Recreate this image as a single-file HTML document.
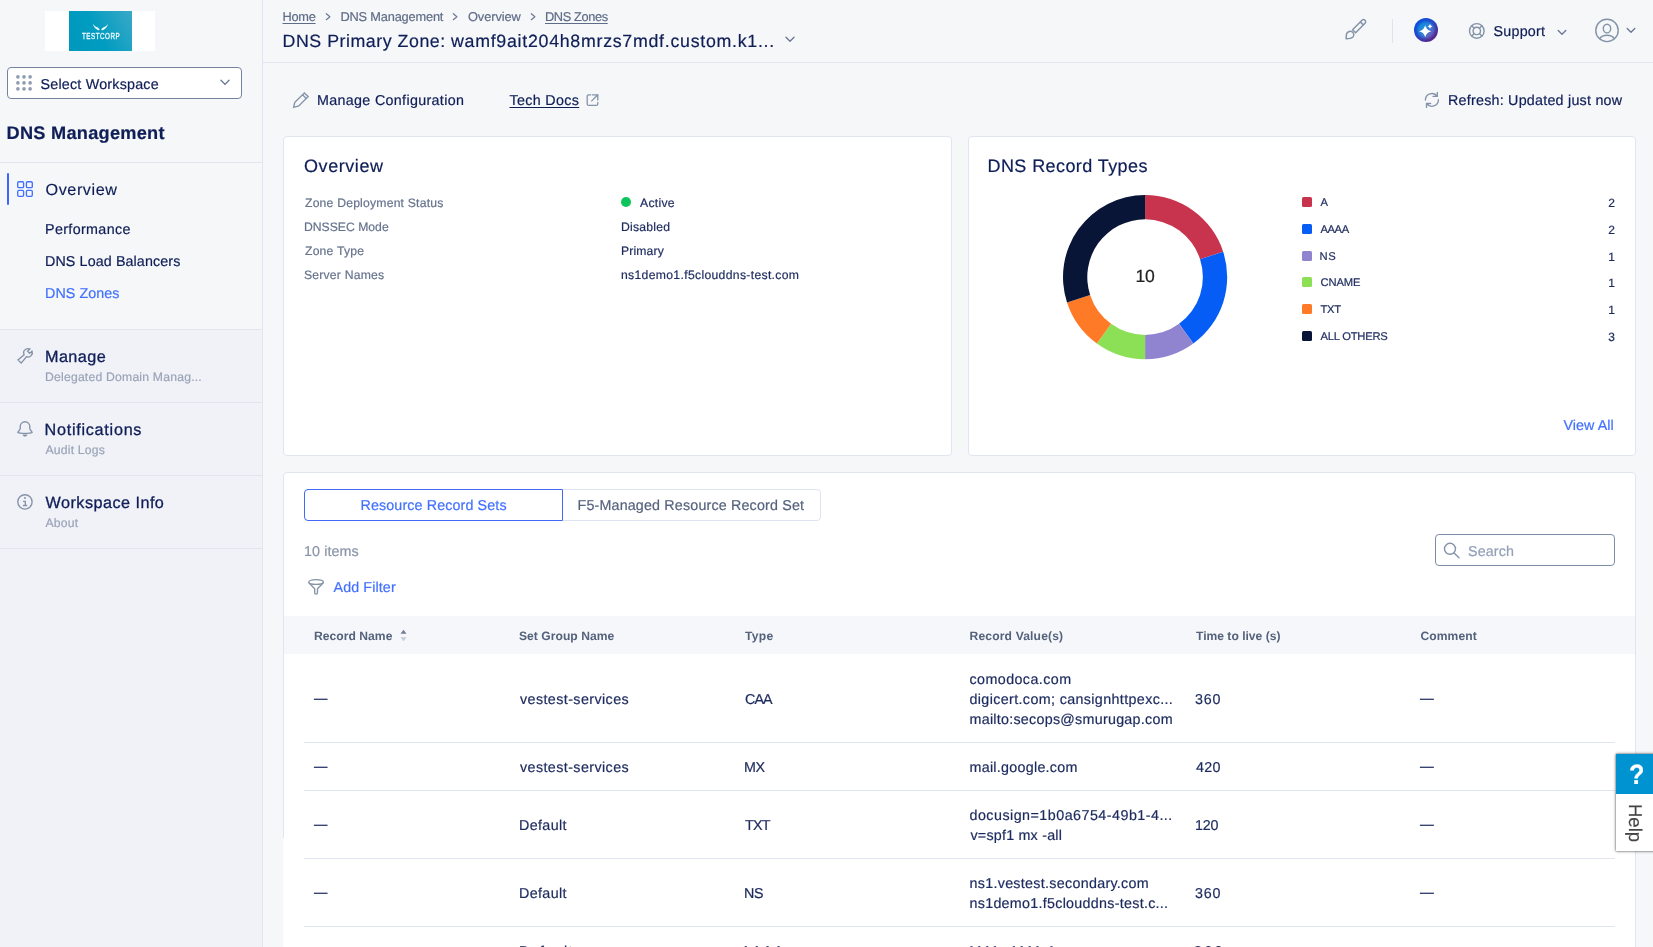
<!DOCTYPE html>
<html lang="en">
<head>
<meta charset="utf-8">
<title>DNS Primary Zone - DNS Management</title>
<style>
*{box-sizing:border-box;margin:0;padding:0}
html,body{width:1653px;height:947px;overflow:hidden}
body{will-change:transform}
body{position:relative;background:#f6f7f9;font-family:"Liberation Sans",Arial,sans-serif;color:#0f1e57}
.a{position:absolute}
.t{position:absolute;white-space:nowrap;line-height:1;transform-origin:0 50%;text-rendering:geometricPrecision;-webkit-text-stroke:.2px currentColor}
h1.t,h2.t{font-weight:normal}
.ul{text-decoration:underline;text-decoration-thickness:1px;text-underline-offset:2px}
.ln{position:absolute;background:#e1e5f0}
.card{position:absolute;background:#fff;border:1px solid #e1e5f0;border-radius:4px}
svg{position:absolute;overflow:visible}
.ic{fill:none;stroke:#8493a8;stroke-width:1.35;stroke-linecap:round;stroke-linejoin:round}
.sq{position:absolute;width:10px;height:10px;border-radius:1.5px;left:1302px}

</style>
</head>
<body>

<aside id="sidebar">
<div class="g">
  <div class="a" style="left:0;top:330px;width:262px;height:617px;background:#f1f2f8"></div>
  <div class="ln" style="left:262px;top:0;width:1px;height:947px"></div>
  <div class="ln" style="left:0;top:162px;width:262px;height:1px"></div>
  <div class="ln" style="left:0;top:329px;width:262px;height:1px"></div>
  <div class="ln" style="left:0;top:402px;width:262px;height:1px"></div>
  <div class="ln" style="left:0;top:475px;width:262px;height:1px"></div>
  <div class="ln" style="left:0;top:548px;width:262px;height:1px"></div>
  <!-- logo -->
  <div class="a" style="left:45px;top:11px;width:110px;height:40px;background:#fff"></div>
  <div class="a" style="left:69px;top:11px;width:63px;height:40px;background:linear-gradient(60deg,#0098bd 0%,#019cc1 45%,#3aa9c7 100%)"></div>
  <svg style="left:92px;top:23px" width="17" height="9" viewBox="0 0 17 9"><path d="M0.9 0.8C1.2 3.2 3 5.600 5.600 6.900C6.600 7.400 7.400 7.400 7.600 6.800C7.600 5.600 6.200 4.600 4.600 4C3 3.300 1.800 2.400 0.900 0.800Z M16 0.800C15.700 3.200 13.900 5.600 11.300 6.900C10.300 7.400 9.500 7.400 9.300 6.800C9.300 5.600 10.700 4.600 12.300 4C13.900 3.300 15.100 2.400 16 0.800Z" fill="#fff" fill-opacity=".92"/></svg>
  <!-- workspace select -->
  <div class="a" style="left:7px;top:67px;width:235px;height:32px;background:#fff;border:1px solid #76839f;border-radius:4px"></div>
  <svg style="left:16px;top:75px" width="16" height="16" viewBox="0 0 16 16" fill="#8e9ab2"><circle cx="1.9" cy="1.9" r="1.8"/><circle cx="8" cy="1.9" r="1.8"/><circle cx="14.1" cy="1.9" r="1.8"/><circle cx="1.9" cy="7.9" r="1.8"/><circle cx="8" cy="7.9" r="1.8"/><circle cx="14.1" cy="7.9" r="1.8"/><circle cx="1.9" cy="13.9" r="1.8"/><circle cx="8" cy="13.9" r="1.8"/><circle cx="14.1" cy="13.9" r="1.8"/></svg>
  <svg style="left:220px;top:79px" width="10" height="7" viewBox="0 0 10 7"><path class="ic" style="stroke:#6b7894" d="M1 1.2 L5 5.4 L9 1.2"/></svg>
  <!-- overview active -->
  <div class="a" style="left:7px;top:173px;width:2px;height:32px;background:#3c66ff;border-radius:1px"></div>
  <svg style="left:17px;top:181px" width="16" height="16" viewBox="0 0 16 16"><g fill="none" stroke="#4371ff" stroke-width="1.35"><rect x="0.7" y="0.7" width="5.9" height="5.9" rx="1.2"/><rect x="9.4" y="0.7" width="5.9" height="5.9" rx="1.2"/><rect x="0.7" y="9.4" width="5.9" height="5.9" rx="1.2"/><rect x="9.4" y="9.4" width="5.9" height="5.9" rx="1.2"/></g></svg>
  <!-- wrench -->
  <svg style="left:17px;top:348px" width="16" height="16" viewBox="0 0 16 16"><path class="ic" style="stroke-linejoin:miter" d="M0.900 11.900L7.100 6.700C6.200 4.600 6.700 2.600 8.400 1.500C9.800 0.600 11.500 0.500 12.800 1L10.600 3.300L12.600 5.400L15 3.100C15.600 4.600 15.300 6.400 14.200 7.600C13 8.900 11.200 9.300 9.400 8.700L4.200 15.100Z"/></svg>
  <!-- bell -->
  <svg style="left:17px;top:421px" width="16" height="17" viewBox="0 0 16 17"><path class="ic" d="M3.200 5.500a4.800 4.800 0 0 1 9.600 0V7.600C12.800 9.400 15.300 10.400 15.200 11.500C13 12.700 3 12.700 0.800 11.500C0.700 10.400 3.200 9.400 3.200 7.600Z"/><path d="M5.600 13.500C6 16.300 10 16.300 10.400 13.500Z" fill="#8493a8"/></svg>
  <!-- info -->
  <svg style="left:17px;top:494px" width="16" height="16" viewBox="0 0 16 16"><circle class="ic" cx="7.950" cy="7.900" r="7.150"/><path class="ic" style="stroke-linecap:butt;stroke-linejoin:miter" d="M5.900 7.300H8.300V11.500M5.900 11.500H10.200"/><rect x="7.100" y="3.100" width="1.700" height="1.700" fill="#8493a8"/></svg>
</div>
<span class="t" id="logo" style="left:82.00px;top:32.03px;font-size:8.7px;color:#f4fbfd;-webkit-text-stroke:0.3px currentColor;letter-spacing:0.700px;transform:scaleX(0.7231)">TESTCORP</span>
<span class="t" id="selws" style="left:40.50px;top:78.03px;font-size:14.3px;letter-spacing:0.213px">Select Workspace</span>
<h2 class="t" id="dnsm" style="left:6.50px;top:124.03px;font-size:18.2px;font-weight:bold;letter-spacing:0.262px">DNS Management</h2>
<a class="t" id="ov" style="left:45.50px;top:182.03px;font-size:16.2px;-webkit-text-stroke:0.15px currentColor;letter-spacing:0.571px">Overview</a>
<a class="t" id="perf" style="left:45.00px;top:223.03px;font-size:14.3px;letter-spacing:0.360px">Performance</a>
<a class="t" id="dlb" style="left:45.00px;top:255.04px;font-size:14.3px;letter-spacing:0.106px">DNS Load Balancers</a>
<a class="t" id="dz" style="left:45.00px;top:287.03px;font-size:14.3px;color:#4371ff;letter-spacing:0.075px">DNS Zones</a>
<a class="t" id="man" style="left:45.00px;top:349.03px;font-size:16.2px;-webkit-text-stroke:0.3px currentColor;letter-spacing:0.440px">Manage</a>
<span class="t" id="man2" style="left:45.00px;top:371.03px;font-size:12.2px;color:#9aa4b8;letter-spacing:0.208px">Delegated Domain Manag...</span>
<a class="t" id="not" style="left:44.50px;top:422.03px;font-size:16.2px;-webkit-text-stroke:0.3px currentColor;letter-spacing:0.733px">Notifications</a>
<span class="t" id="not2" style="left:45.50px;top:444.03px;font-size:12.2px;color:#9aa4b8;letter-spacing:0.200px">Audit Logs</span>
<a class="t" id="wi" style="left:45.50px;top:495.03px;font-size:16.2px;-webkit-text-stroke:0.3px currentColor;letter-spacing:0.477px">Workspace Info</a>
<span class="t" id="wi2" style="left:45.50px;top:517.03px;font-size:12.2px;color:#9aa4b8;letter-spacing:0.200px">About</span>
</aside>

<header id="topbar">
<div class="g">
  <div class="ln" style="left:263px;top:62px;width:1390px;height:1px"></div>
  <svg style="left:325px;top:12px" width="7" height="9" viewBox="0 0 7 9"><path class="ic" style="stroke:#6b7894;stroke-width:1.2" d="M1.3 1.7 L4.900 4.700 L1.300 7.700"/></svg>
  <svg style="left:452px;top:12px" width="7" height="9" viewBox="0 0 7 9"><path class="ic" style="stroke:#6b7894;stroke-width:1.2" d="M1.3 1.7 L4.900 4.700 L1.300 7.700"/></svg>
  <svg style="left:529.500px;top:12px" width="7" height="9" viewBox="0 0 7 9"><path class="ic" style="stroke:#6b7894;stroke-width:1.2" d="M1.3 1.7 L4.900 4.700 L1.300 7.700"/></svg>
  <svg style="left:785px;top:36px" width="10" height="7" viewBox="0 0 10 7"><path class="ic" style="stroke:#6b7894" d="M1 1.300 L5 5.300 L9 1.300"/></svg>
  <!-- brush -->
  <svg style="left:1345px;top:18px" width="22" height="22" viewBox="0 0 22 22"><g class="ic" style="stroke-width:1.5"><path transform="translate(9.100,13.200) rotate(45)" d="M-2.150 0V-13.300a2.150 2.150 0 0 1 4.300 0V0Z M-2.150 -11H2.150"/><path d="M1.100 20.700C1.300 18.500 1.200 17 1.700 15.600C2.600 13.400 5.500 12.600 7.400 14C9.200 15.400 9.300 17.800 7.600 19.300C6 20.700 3.500 20.700 1.100 20.700Z"/></g></svg>
  <div class="a" style="left:1392px;top:19px;width:1px;height:24px;background:#dfe3ee"></div>
  <!-- AI assistant -->
  <svg style="left:1414px;top:18px" width="24" height="24" viewBox="0 0 24 24">
    <defs>
      <linearGradient id="aig1" x1="0.15" y1="0.1" x2="0.85" y2="0.9"><stop offset="0" stop-color="#0a4fe0"/><stop offset="0.5" stop-color="#2a47c0"/><stop offset="1" stop-color="#5e1f86"/></linearGradient>
      <linearGradient id="aig2" x1="0.1" y1="0.1" x2="0.9" y2="0.9"><stop offset="0" stop-color="#0b93e0"/><stop offset="0.5" stop-color="#2f7fd8"/><stop offset="1" stop-color="#7a55b0"/></linearGradient>
      <filter id="aib" x="-20%" y="-20%" width="140%" height="140%"><feGaussianBlur stdDeviation="1.1"/></filter>
      <clipPath id="aic"><circle cx="12" cy="12" r="12"/></clipPath>
    </defs>
    <circle cx="12" cy="12" r="12" fill="url(#aig1)"/>
    <g clip-path="url(#aic)"><circle cx="12" cy="12" r="8.600" fill="url(#aig2)" filter="url(#aib)"/></g>
    <path d="M11.2 7.199999999999999Q12.44 12.00 17.4 13.2Q12.44 14.40 11.2 19.2Q9.96 14.40 4.999999999999999 13.2Q9.96 12.00 11.2 7.199999999999999Z" fill="#fff"/>
    <path d="M16 6.0Q16.48 7.92 18.4 8.4Q16.48 8.88 16 10.8Q15.52 8.88 13.6 8.4Q15.52 7.92 16 6.0Z" fill="#fff"/>
  </svg>
  <!-- support -->
  <svg style="left:1468px;top:22px" width="18" height="18" viewBox="0 0 18 18"><g class="ic" style="stroke-width:1.4"><circle cx="8.800" cy="8.900" r="7.300"/><circle cx="8.800" cy="8.900" r="3.700"/><path d="M3.700 3.800 L6.200 6.300 M13.900 3.800 L11.400 6.300 M3.700 14 L6.200 11.500 M13.900 14 L11.400 11.500"/></g></svg>
  <svg style="left:1557px;top:29px" width="10" height="7" viewBox="0 0 10 7"><path class="ic" style="stroke:#6b7894" d="M1.200 1.400 L5 5.200 L8.800 1.400"/></svg>
  <!-- user -->
  <svg style="left:1595px;top:18px" width="24" height="24" viewBox="0 0 24 24"><g class="ic" style="stroke-width:1.4"><circle cx="12" cy="12.400" r="11.200"/><ellipse cx="12" cy="10.600" rx="3.700" ry="4.300"/><path d="M4.600 20.600c1.600-2.300 4.200-3.300 7.400-3.300s5.800 1 7.400 3.300"/></g></svg>
  <svg style="left:1626px;top:27px" width="10" height="7" viewBox="0 0 10 7"><path class="ic" style="stroke:#6b7894" d="M1.200 1.400 L5 5.200 L8.800 1.400"/></svg>
  <!-- toolbar icons -->
  <svg style="left:292px;top:92px" width="18" height="17" viewBox="0 0 18 17"><path class="ic" style="stroke-linejoin:miter" d="M12.400 0.900L16.200 4.600L6.800 14L1.600 15.300L2.800 10.300ZM10.500 2.800L14.300 6.500"/></svg>
  <svg style="left:586px;top:93.500px" width="13" height="13" viewBox="0 0 13 13"><path class="ic" style="stroke-width:1.3" d="M4.700 0.800H2.700A1.500 1.500 0 0 0 1.200 2.300V9.900A1.500 1.500 0 0 0 2.700 11.400H10.300A1.500 1.500 0 0 0 11.800 9.900V8.400M6.400 0.800H11.800V6.100M11.800 0.800L5.700 6.900"/></svg>
  <svg style="left:1424px;top:92px" width="16" height="16" viewBox="0 0 16 16"><path class="ic" d="M1.400 8.100A6.500 6.500 0 0 1 13.200 4.300M13.300 0.500V4.400H9.100M14.400 7.700A6.500 6.500 0 0 1 2.600 11.500M2.500 15.400V11.500H6.600"/></svg>
</div>
<a class="t ul" id="bc1" style="left:282.50px;top:11.04px;font-size:12.8px;color:#5f6c87;letter-spacing:-0.267px">Home</a>
<a class="t" id="bc2" style="left:340.50px;top:11.04px;font-size:12.8px;color:#5f6c87;letter-spacing:-0.185px">DNS Management</a>
<a class="t" id="bc3" style="left:468.00px;top:11.04px;font-size:12.8px;color:#5f6c87;letter-spacing:-0.086px">Overview</a>
<a class="t ul" id="bc4" style="left:545.00px;top:11.04px;font-size:12.8px;color:#5f6c87;letter-spacing:-0.375px">DNS Zones</a>
<h1 class="t" id="title" style="left:282.50px;top:33.03px;font-size:17.8px;letter-spacing:0.537px">DNS Primary Zone:</h1>
<span class="t" id="title2" style="left:451.00px;top:33.03px;font-size:17.8px;letter-spacing:0.721px">wamf9ait204h8mrzs7mdf.custom.k1...</span>
<span class="t" id="sup" style="left:1493.50px;top:25.03px;font-size:14.3px;letter-spacing:0.233px">Support</span>
<a class="t" id="mc" style="left:317.00px;top:94.04px;font-size:14.3px;letter-spacing:0.326px">Manage Configuration</a>
<a class="t ul" id="td" style="left:509.50px;top:94.04px;font-size:14.3px;letter-spacing:0.325px">Tech Docs</a>
<span class="t" id="ref" style="left:1448.00px;top:94.03px;font-size:14.3px;letter-spacing:0.233px">Refresh: Updated just now</span>
</header>

<main id="content">
<section id="overview-card">
<div class="g">
  <div class="card" style="left:283px;top:136px;width:669px;height:320px"></div>
  <div class="a" style="left:621px;top:197px;width:10.400px;height:10.400px;border-radius:50%;background:#0cc65b"></div>
</div>
<h2 class="t" id="ovt" style="left:304.00px;top:157.02px;font-size:18px;letter-spacing:0.571px">Overview</h2>
<span class="t" id="l1" style="left:305.00px;top:197.02px;font-size:12.2px;color:#66738d;letter-spacing:0.200px">Zone Deployment Status</span>
<span class="t" id="l2" style="left:304.00px;top:221.03px;font-size:12.2px;color:#66738d">DNSSEC Mode</span>
<span class="t" id="l3" style="left:305.00px;top:245.02px;font-size:12.2px;color:#66738d;letter-spacing:0.200px">Zone Type</span>
<span class="t" id="l4" style="left:304.00px;top:269.03px;font-size:12.2px;color:#66738d;letter-spacing:0.200px">Server Names</span>
<span class="t" id="v1" style="left:640.00px;top:197.03px;font-size:12.2px;color:#1c2a5e;letter-spacing:0.280px">Active</span>
<span class="t" id="v2" style="left:621.00px;top:221.03px;font-size:12.2px;color:#1c2a5e;letter-spacing:0.229px">Disabled</span>
<span class="t" id="v3" style="left:621.00px;top:245.03px;font-size:12.2px;color:#1c2a5e;letter-spacing:0.133px">Primary</span>
<span class="t" id="v4" style="left:621.00px;top:269.02px;font-size:12.2px;color:#1c2a5e;letter-spacing:0.319px">ns1demo1.f5clouddns-test.com</span>
</section>

<section id="record-types-card">
<div class="g">
  <div class="card" style="left:968px;top:136px;width:668px;height:320px"></div>
  <svg style="left:1063px;top:194.700px" width="164.200" height="164.200" viewBox="-82.100 -82.100 164.200 164.200">
    <path d="M0.00 -82.10A82.1 82.1 0 0 1 78.08 -25.37L54.97 -17.86A57.8 57.8 0 0 0 0.00 -57.80Z" fill="#c8334d"/>
    <path d="M78.08 -25.37A82.1 82.1 0 0 1 48.26 66.42L33.97 46.76A57.8 57.8 0 0 0 54.97 -17.86Z" fill="#055df5"/>
    <path d="M48.26 66.42A82.1 82.1 0 0 1 0.00 82.10L0.00 57.80A57.8 57.8 0 0 0 33.97 46.76Z" fill="#9083cf"/>
    <path d="M0.00 82.10A82.1 82.1 0 0 1 -48.26 66.42L-33.97 46.76A57.8 57.8 0 0 0 0.00 57.80Z" fill="#8ce055"/>
    <path d="M-48.26 66.42A82.1 82.1 0 0 1 -78.08 25.37L-54.97 17.86A57.8 57.8 0 0 0 -33.97 46.76Z" fill="#ff7a27"/>
    <path d="M-78.08 25.37A82.1 82.1 0 0 1 -0.00 -82.10L-0.00 -57.80A57.8 57.8 0 0 0 -54.97 17.86Z" fill="#081537"/>
  </svg>
  <div class="sq" style="top:197.300px;background:#c8334d"></div>
  <div class="sq" style="top:224px;background:#055df5"></div>
  <div class="sq" style="top:250.800px;background:#9083cf"></div>
  <div class="sq" style="top:277px;background:#8ce055"></div>
  <div class="sq" style="top:304px;background:#ff7a27"></div>
  <div class="sq" style="top:331px;background:#081537"></div>
</div>
<h2 class="t" id="rtt" style="left:987.50px;top:157.02px;font-size:18px;letter-spacing:0.413px">DNS Record Types</h2>
<span class="t" id="ten" style="left:1135.50px;top:268.03px;font-size:17.6px;color:#222222;letter-spacing:-0.400px">10</span>
<span class="t" id="lg0" style="left:1320.50px;top:198.04px;font-size:11.2px;color:#1c2a5e">A</span>
<span class="t" id="lv0" style="left:1608.20px;top:197.03px;font-size:12px;color:#1c2a5e">2</span>
<span class="t" id="lg1" style="left:1320.50px;top:225.04px;font-size:11.2px;color:#1c2a5e;letter-spacing:-0.400px">AAAA</span>
<span class="t" id="lv1" style="left:1608.20px;top:224.03px;font-size:12px;color:#1c2a5e">2</span>
<span class="t" id="lg2" style="left:1319.50px;top:252.04px;font-size:11.2px;color:#1c2a5e;letter-spacing:0.600px">NS</span>
<span class="t" id="lv2" style="left:1608.20px;top:251.03px;font-size:12px;color:#1c2a5e">1</span>
<span class="t" id="lg3" style="left:1320.50px;top:278.04px;font-size:11.2px;color:#1c2a5e;letter-spacing:-0.100px">CNAME</span>
<span class="t" id="lv3" style="left:1608.20px;top:277.03px;font-size:12px;color:#1c2a5e">1</span>
<span class="t" id="lg4" style="left:1320.50px;top:305.04px;font-size:11.2px;color:#1c2a5e;letter-spacing:-0.300px">TXT</span>
<span class="t" id="lv4" style="left:1608.20px;top:304.03px;font-size:12px;color:#1c2a5e">1</span>
<span class="t" id="lg5" style="left:1320.50px;top:332.04px;font-size:11.2px;color:#1c2a5e;letter-spacing:-0.222px">ALL OTHERS</span>
<span class="t" id="lv5" style="left:1608.20px;top:331.03px;font-size:12px;color:#1c2a5e">3</span>
<a class="t" id="va" style="left:1563.50px;top:419.03px;font-size:14.3px;color:#4371ff;letter-spacing:0.057px">View All</a>
</section>

<section id="records-table">
<div class="g">
  <div class="card" style="left:283px;top:472px;width:1353px;height:500px"></div>
  <div class="a" style="left:283px;top:838px;width:1px;height:109px;background:#fbfbfd"></div>
  <!-- tabs -->
  <div class="a" style="left:562px;top:489px;width:259px;height:32px;border:1px solid #dfe3ef;border-radius:0 4px 4px 0"></div>
  <div class="a" style="left:304px;top:489px;width:259px;height:32px;border:1px solid #3f69f6;border-radius:4px 0 0 4px;background:#fff"></div>
  <!-- search -->
  <div class="a" style="left:1435px;top:534px;width:180px;height:32px;border:1px solid #7f8ca8;border-radius:4px;background:#fff"></div>
  <svg style="left:1443px;top:541.500px" width="17" height="17" viewBox="0 0 17 17"><g class="ic" style="stroke-width:1.4"><circle cx="7" cy="6.800" r="5.500"/><path d="M11.100 10.900 L16 15.700"/></g></svg>
  <!-- filter -->
  <svg style="left:308px;top:579px" width="16" height="16" viewBox="0 0 16 16"><g class="ic"><ellipse cx="8.050" cy="3" rx="7.300" ry="2.400"/><path d="M1 4.100L6.700 9.700V13.700a1.400 1.400 0 0 0 2.800 0V9.700L15.100 4.100"/></g></svg>
  <!-- table head -->
  <div class="a" style="left:284px;top:616px;width:1351px;height:38px;background:#f5f7fa"></div>
  <svg style="left:400px;top:629px" width="7" height="13" viewBox="0 0 7 13"><path d="M3.500 0.800 L6.500 4.800 H0.500Z" fill="#6f7c93"/><path d="M3.500 12.200 L6.500 8.200 H0.500Z" fill="#c3cad8"/></svg>
  <div class="ln" style="left:304px;top:742px;width:1311px;height:1px"></div>
  <div class="ln" style="left:304px;top:790px;width:1311px;height:1px"></div>
  <div class="ln" style="left:304px;top:858px;width:1311px;height:1px"></div>
  <div class="ln" style="left:304px;top:926px;width:1311px;height:1px"></div>
</div>
<span class="t" id="tab1" style="left:360.50px;top:499.03px;font-size:14.3px;color:#4371ff;letter-spacing:0.116px">Resource Record Sets</span>
<span class="t" id="tab2" style="left:577.50px;top:499.03px;font-size:14.3px;color:#56637e;letter-spacing:0.166px">F5-Managed Resource Record Set</span>
<span class="t" id="items" style="left:304.00px;top:545.04px;font-size:14.3px;color:#8a94a8;letter-spacing:0.086px">10 items</span>
<span class="t" id="search" style="left:1468.00px;top:545.03px;font-size:14.3px;color:#93a0b8;letter-spacing:0.120px">Search</span>
<a class="t" id="af" style="left:333.50px;top:581.04px;font-size:14.3px;color:#4371ff;letter-spacing:0.111px">Add Filter</a>
<span class="t" id="h1" style="left:314.00px;top:630.03px;font-size:12.1px;color:#55627c;font-weight:bold;-webkit-text-stroke:0px currentColor;letter-spacing:0.040px">Record Name</span>
<span class="t" id="h2" style="left:519.00px;top:630.03px;font-size:12.1px;color:#55627c;font-weight:bold;-webkit-text-stroke:0px currentColor;letter-spacing:0.031px">Set Group Name</span>
<span class="t" id="h3" style="left:745.00px;top:630.03px;font-size:12.1px;color:#55627c;font-weight:bold;-webkit-text-stroke:0px currentColor;letter-spacing:0.267px">Type</span>
<span class="t" id="h4" style="left:969.50px;top:630.03px;font-size:12.1px;color:#55627c;font-weight:bold;-webkit-text-stroke:0px currentColor;letter-spacing:0.157px">Record Value(s)</span>
<span class="t" id="h5" style="left:1196.00px;top:630.03px;font-size:12.1px;color:#55627c;font-weight:bold;-webkit-text-stroke:0px currentColor">Time to live (s)</span>
<span class="t" id="h6" style="left:1420.50px;top:630.03px;font-size:12.1px;color:#55627c;font-weight:bold;-webkit-text-stroke:0px currentColor;letter-spacing:0.067px">Comment</span>
<span class="t" id="r1d" style="left:314.00px;top:692.03px;font-size:14.3px;color:#1c2a5e;-webkit-text-stroke:0.2px currentColor;transform:scaleX(0.9359)">—</span>
<span class="t" id="r1n" style="left:520.00px;top:693.03px;font-size:14.3px;color:#1c2a5e;letter-spacing:0.413px">vestest-services</span>
<span class="t" id="r1t" style="left:745.00px;top:693.03px;font-size:14.3px;color:#1c2a5e;letter-spacing:-0.900px">CAA</span>
<span class="t" id="r1v0" style="left:969.50px;top:673.03px;font-size:14.3px;color:#1c2a5e;letter-spacing:0.418px">comodoca.com</span>
<span class="t" id="r1v1" style="left:969.50px;top:693.03px;font-size:14.3px;color:#1c2a5e;letter-spacing:0.367px">digicert.com; cansignhttpexc...</span>
<span class="t" id="r1v2" style="left:969.50px;top:713.03px;font-size:14.3px;color:#1c2a5e;letter-spacing:0.264px">mailto:secops@smurugap.com</span>
<span class="t" id="r1l" style="left:1195.00px;top:693.03px;font-size:14.3px;color:#1c2a5e;letter-spacing:0.800px">360</span>
<span class="t" id="r1c" style="left:1420.00px;top:692.03px;font-size:14.3px;color:#1c2a5e;-webkit-text-stroke:0.2px currentColor;transform:scaleX(0.9639)">—</span>
<span class="t" id="r2d" style="left:314.00px;top:760.03px;font-size:14.3px;color:#1c2a5e;-webkit-text-stroke:0.2px currentColor;transform:scaleX(0.9359)">—</span>
<span class="t" id="r2n" style="left:520.00px;top:761.03px;font-size:14.3px;color:#1c2a5e;letter-spacing:0.413px">vestest-services</span>
<span class="t" id="r2t" style="left:744.00px;top:761.03px;font-size:14.3px;color:#1c2a5e;letter-spacing:-0.400px">MX</span>
<span class="t" id="r2v0" style="left:969.50px;top:761.03px;font-size:14.3px;color:#1c2a5e;letter-spacing:0.271px">mail.google.com</span>
<span class="t" id="r2l" style="left:1196.00px;top:761.03px;font-size:14.3px;color:#1c2a5e;letter-spacing:0.300px">420</span>
<span class="t" id="r2c" style="left:1420.00px;top:760.03px;font-size:14.3px;color:#1c2a5e;-webkit-text-stroke:0.2px currentColor;transform:scaleX(0.9639)">—</span>
<span class="t" id="r3d" style="left:314.00px;top:818.03px;font-size:14.3px;color:#1c2a5e;-webkit-text-stroke:0.2px currentColor;transform:scaleX(0.9359)">—</span>
<span class="t" id="r3n" style="left:519.00px;top:819.03px;font-size:14.3px;color:#1c2a5e;letter-spacing:0.367px">Default</span>
<span class="t" id="r3t" style="left:745.00px;top:819.03px;font-size:14.3px;color:#1c2a5e;letter-spacing:-0.700px">TXT</span>
<span class="t" id="r3v0" style="left:969.50px;top:809.03px;font-size:14.3px;color:#1c2a5e;letter-spacing:0.477px">docusign=1b0a6754-49b1-4...</span>
<span class="t" id="r3v1" style="left:970.50px;top:829.03px;font-size:14.3px;color:#1c2a5e;letter-spacing:0.215px">v=spf1 mx -all</span>
<span class="t" id="r3l" style="left:1195.00px;top:819.03px;font-size:14.3px;color:#1c2a5e;letter-spacing:-0.200px">120</span>
<span class="t" id="r3c" style="left:1420.00px;top:818.03px;font-size:14.3px;color:#1c2a5e;-webkit-text-stroke:0.2px currentColor;transform:scaleX(0.9639)">—</span>
<span class="t" id="r4d" style="left:314.00px;top:886.03px;font-size:14.3px;color:#1c2a5e;-webkit-text-stroke:0.2px currentColor;transform:scaleX(0.9359)">—</span>
<span class="t" id="r4n" style="left:519.00px;top:887.03px;font-size:14.3px;color:#1c2a5e;letter-spacing:0.367px">Default</span>
<span class="t" id="r4t" style="left:744.00px;top:887.03px;font-size:14.3px;color:#1c2a5e;letter-spacing:-0.200px">NS</span>
<span class="t" id="r4v0" style="left:969.50px;top:877.03px;font-size:14.3px;color:#1c2a5e;letter-spacing:0.292px">ns1.vestest.secondary.com</span>
<span class="t" id="r4v1" style="left:969.50px;top:897.03px;font-size:14.3px;color:#1c2a5e;letter-spacing:0.279px">ns1demo1.f5clouddns-test.c...</span>
<span class="t" id="r4l" style="left:1195.00px;top:887.03px;font-size:14.3px;color:#1c2a5e;letter-spacing:0.800px">360</span>
<span class="t" id="r4c" style="left:1420.00px;top:886.03px;font-size:14.3px;color:#1c2a5e;-webkit-text-stroke:0.2px currentColor;transform:scaleX(0.9639)">—</span>
<span class="t" id="r5d" style="left:314.00px;top:944.03px;font-size:14.3px;color:#1c2a5e;-webkit-text-stroke:0.2px currentColor">—</span>
<span class="t" id="r5n" style="left:519.00px;top:945.03px;font-size:14.3px;color:#1c2a5e;letter-spacing:1.367px">Default</span>
<span class="t" id="r5t" style="left:741.00px;top:945.03px;font-size:14.3px;color:#1c2a5e;letter-spacing:1.400px">AAAA</span>
<span class="t" id="r5v0" style="left:967.50px;top:945.03px;font-size:14.3px;color:#1c2a5e;letter-spacing:0.982px">1111::1111:1</span>
<span class="t" id="r5l" style="left:1194.00px;top:945.03px;font-size:14.3px;color:#1c2a5e;letter-spacing:2.300px">360</span>
<span class="t" id="r5c" style="left:1420.00px;top:944.03px;font-size:14.3px;color:#1c2a5e;-webkit-text-stroke:0.2px currentColor">—</span>
</section>
</main>

<div id="help-widget">
<div class="g">
  <div class="a" style="left:1616px;top:754px;width:40px;height:97px;background:#fff;box-shadow:0 0 3px rgba(0,0,0,.6),0 0 1px rgba(0,0,0,.5)"></div>
  <div class="a" style="left:1616px;top:754px;width:40px;height:40px;background:#0093d2"></div>
</div>
<span class="t" style="left:1629.300px;top:760.500px;font-size:28px;font-weight:bold;color:#fff;transform:scaleX(.9)">?</span>
<span class="t" style="left:1634.800px;top:804px;font-size:18.500px;color:#444;transform-origin:0 0;transform:rotate(90deg) translate(0,-50%);line-height:1">Help</span>
</div>

</body>
</html>
